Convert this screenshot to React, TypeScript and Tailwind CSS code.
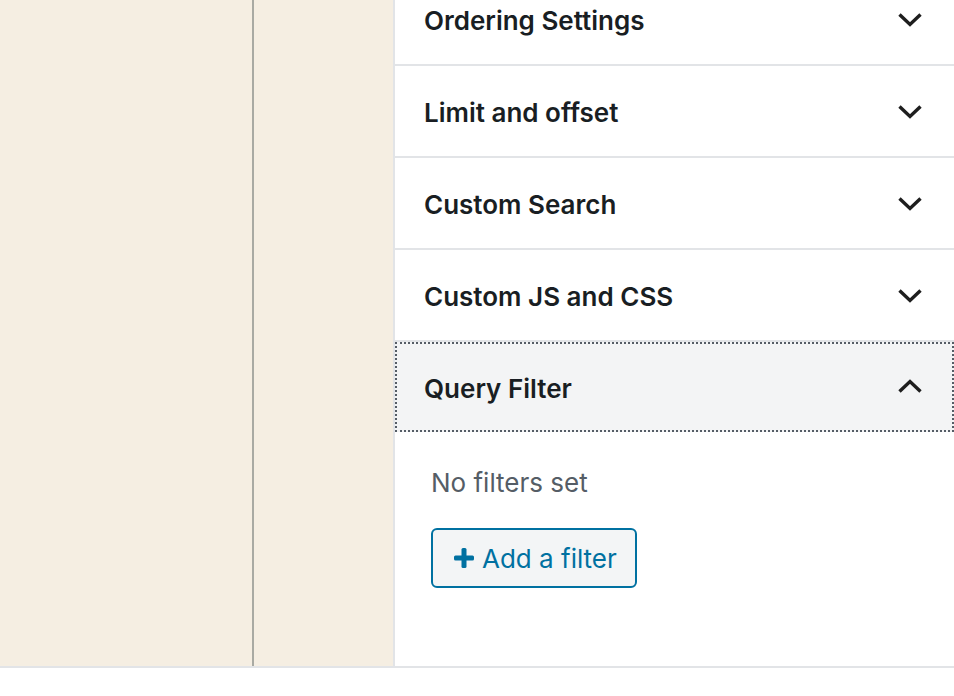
import React from "react";

const ChevronDown = () => (
  <svg width="24" height="14" viewBox="0 0 24 14" fill="none" stroke="#1e1e1e" strokeWidth="3.4">
    <polyline points="1.5,1.5 12,11.5 22.5,1.5" />
  </svg>
);

const ChevronUp = () => (
  <svg width="24" height="14" viewBox="0 0 24 14" fill="none" stroke="#1e1e1e" strokeWidth="3.4">
    <polyline points="1.5,12.5 12,2.5 22.5,12.5" />
  </svg>
);

function PanelRow({ title }: { title: string }) {
  return (
    <div className="h-[92px] border-b-2 border-[#e2e4e7] flex items-center justify-between pl-[29px] pr-[32px]">
      <span className="mt-[2px] text-[26px] font-semibold text-[#191e23]">{title}</span>
      <span className="mt-[1px]">
        <ChevronDown />
      </span>
    </div>
  );
}

export default function App() {
  return (
    <div
      className="w-[954px] h-[696px] bg-white flex flex-col overflow-hidden"
      style={{ fontFamily: "Inter, 'Noto Sans', sans-serif" }}
    >
      <div className="h-[668px] flex border-b-2 border-[#e2e4e7]">
        <div className="w-[252px] bg-[#f5eee2]" />
        <div className="w-[2px] bg-[#a9aaa3]" />
        <div className="w-[139px] bg-[#f5eee2]" />
        <div className="flex-1 border-l-2 border-[#e2e4e7] bg-white">
          <div className="-mt-[26px]">
            <PanelRow title="Ordering Settings" />
            <PanelRow title="Limit and offset" />
            <PanelRow title="Custom Search" />
            <PanelRow title="Custom JS and CSS" />
            <div className="h-[90px] bg-[#f3f4f5] flex items-center justify-between pl-[29px] pr-[32px] outline-2 outline-dotted outline-[#555d66] -outline-offset-[2px]">
              <span className="mt-[2px] text-[26px] font-semibold text-[#191e23]">Query Filter</span>
              <span className="-mt-[2px]">
                <ChevronUp />
              </span>
            </div>
            <div className="pl-[36px] pt-[35px]">
              <div className="text-[26px] text-[#555d66] leading-[32px]">No filters set</div>
              <button className="mt-[29px] h-[60px] pl-[21px] pr-[18px] flex items-center gap-[8px] rounded-[6px] border-2 border-[#0071a1] bg-[#f3f5f6] text-[#0071a1] text-[26px]">
                <svg width="20" height="20" viewBox="0 0 20 20" fill="#0071a1">
                  <rect x="7.5" y="0" width="5" height="20" rx="1.5" />
                  <rect x="0" y="7.5" width="20" height="5" rx="1.5" />
                </svg>
                <span>Add a filter</span>
              </button>
            </div>
          </div>
        </div>
      </div>
    </div>
  );
}
